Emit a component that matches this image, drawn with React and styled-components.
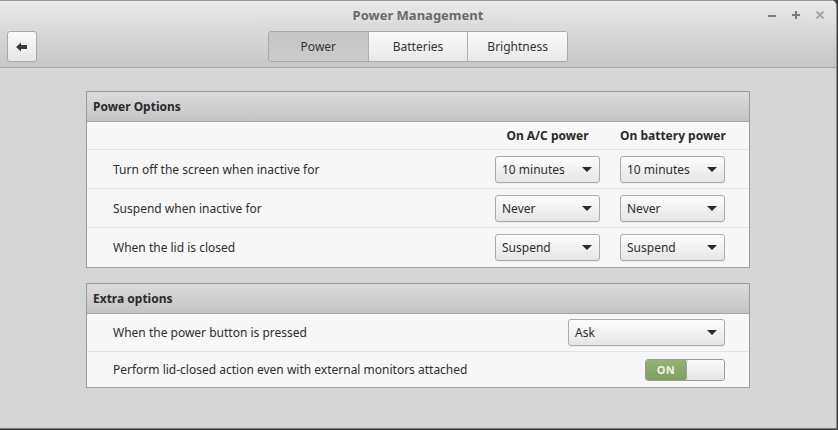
import React from "react";
import styled, { createGlobalStyle } from "styled-components";

const Global = createGlobalStyle`
    html, body { margin:0; padding:0; background:#3c3c3c; }
    body { font-family: "Noto Sans", "DejaVu Sans", sans-serif; }
`

const Window = styled.div`
    width:836px;
    height:428px;
    background-color:#d6d6d6;
    border-right:1px solid #8e8e8e;
    border-bottom:1px solid #7a7a7a;
    border-top-right-radius:6px;
    display:flex;
    flex-direction:column;
    overflow:hidden;
`

const TitleBar = styled.div`
    height:68px;
    box-sizing:border-box;
    border-top:1px solid #9a9a9a;
    border-bottom:1px solid #a6a6a6;
    background:linear-gradient(#e9e9e9, #c6c6c6);
    display:grid;
    grid-template-columns:1fr auto 1fr;
    grid-template-rows:28px 32px;
    padding:0 7px;
`

const Title = styled.div`
    grid-column:2;
    grid-row:1;
    align-self:center;
    text-align:center;
    font-size:13px;
    font-weight:bold;
    color:#6a6a6a;
`

const Controls = styled.div`
    grid-column:3;
    grid-row:1;
    justify-self:end;
    display:flex;
    gap:10px;
    align-items:center;
    padding-right:2px;
`

const Ctrl = styled.span`
    width:14px;
    height:14px;
    display:flex;
    align-items:center;
    justify-content:center;
`

const BackButton = styled.button`
    grid-column:1;
    grid-row:2;
    width:30px;
    height:31px;
    padding:0;
    border:1px solid #a9a9a9;
    border-radius:3px;
    background:linear-gradient(#fafafa, #e6e6e6);
    display:flex;
    align-items:center;
    justify-content:center;
    margin-top:2px;
`

const Tabs = styled.div`
    grid-column:2;
    grid-row:2;
    display:flex;
    margin-top:2px;
    height:31px;
    border:1px solid #a9a9a9;
    border-radius:3px;
    overflow:hidden;
    box-sizing:border-box;
    width:300px;
`

const Tab = styled.div`
    flex:1;
    display:flex;
    align-items:center;
    justify-content:center;
    font-size:12px;
    color:#333;
    background:${p => p.$active ? "linear-gradient(#c4c4c4, #cbcbcb)" : "linear-gradient(#fbfbfb, #e8e8e8)"};
    border-left:${p => p.$first ? "none" : "1px solid #b0b0b0"};
`

const Body = styled.div`
    flex:1;
    display:flex;
    flex-direction:column;
    align-items:center;
    padding-top:23px;
    gap:15px;
`

const Panel = styled.div`
    width:664px;
    box-sizing:border-box;
    border:1px solid #9c9c9c;
    background:#f7f7f7;
`

const PanelHeader = styled.div`
    height:30px;
    box-sizing:border-box;
    border-bottom:1px solid #a4a4a4;
    background:linear-gradient(#dcdcdc, #c3c3c3);
    display:flex;
    align-items:center;
    padding-left:6px;
    font-size:12px;
    font-weight:bold;
    color:#2b2b2b;
`

const ColumnHead = styled.div`
    height:28px;
    box-sizing:border-box;
    display:grid;
    grid-template-columns:1fr 105px 105px;
    column-gap:20px;
    padding-right:24px;
    align-items:center;
    border-bottom:1px solid #e3e3e3;
    font-size:12px;
    font-weight:bold;
    color:#2b2b2b;
    span { text-align:center; white-space:nowrap; }
`

const Row = styled.div`
    height:${p => p.$h || 39}px;
    box-sizing:border-box;
    display:grid;
    grid-template-columns:${p => p.$cols || "1fr 105px 105px"};
    column-gap:20px;
    padding:0 24px 0 26px;
    align-items:center;
    border-bottom:${p => p.$last ? "none" : "1px solid #e3e3e3"};
`

const Label = styled.div`
    font-size:12px;
    color:#2e2e2e;
`

const Select = styled.div`
    height:27px;
    box-sizing:border-box;
    border:1px solid #ababab;
    border-radius:3px;
    background:linear-gradient(#fdfdfd, #e5e5e5);
    display:flex;
    align-items:center;
    justify-content:space-between;
    padding:0 7px 0 6px;
    font-size:12px;
    color:#2e2e2e;
    box-shadow:0 1px 0 rgba(0,0,0,0.05);
`

const Arrow = styled.span`
    width:0;
    height:0;
    border-left:5px solid transparent;
    border-right:5px solid transparent;
    border-top:5px solid #2a2a2a;
`

const Switch = styled.div`
    justify-self:end;
    width:80px;
    height:22px;
    box-sizing:border-box;
    border:1px solid #9a9a9a;
    border-radius:3px;
    display:flex;
    overflow:hidden;
`

const SwitchOn = styled.div`
    width:40px;
    background:linear-gradient(#93b273, #7f9f60);
    color:#f2f2e6;
    font-size:11px;
    font-weight:bold;
    display:flex;
    align-items:center;
    justify-content:center;
    letter-spacing:0.5px;
`

const Knob = styled.div`
    flex:1;
    background:linear-gradient(#fafafa, #e4e4e4);
    border-left:1px solid #a0a0a0;
    border-radius:3px;
`

const Dropdown = ({ value }) => (
    <Select>{value}<Arrow /></Select>
)

const rows = [
    ["Turn off the screen when inactive for", "10 minutes", "10 minutes"],
    ["Suspend when inactive for", "Never", "Never"],
    ["When the lid is closed", "Suspend", "Suspend"],
]

export default function App() {
    return (
        <>
            <Global />
            <Window>
                <TitleBar>
                    <Title>Power Management</Title>
                    <Controls>
                        <Ctrl>
                            <svg width="10" height="10" viewBox="0 0 10 10"><rect x="1" y="5" width="8" height="2" fill="#7a7a7a" /></svg>
                        </Ctrl>
                        <Ctrl>
                            <svg width="10" height="10" viewBox="0 0 10 10"><path d="M1 5h8M5 1v8" stroke="#7a7a7a" strokeWidth="2" /></svg>
                        </Ctrl>
                        <Ctrl>
                            <svg width="10" height="10" viewBox="0 0 10 10"><path d="M1.5 1.5l7 7M8.5 1.5l-7 7" stroke="#a6a6a6" strokeWidth="2" /></svg>
                        </Ctrl>
                    </Controls>
                    <BackButton>
                        <svg width="12" height="10" viewBox="0 0 12 10">
                            <path d="M0 5 L5 0.5 L5 3 L11 3 L11 7 L5 7 L5 9.5 Z" fill="#3a3a3a" />
                        </svg>
                    </BackButton>
                    <Tabs>
                        <Tab $active $first>Power</Tab>
                        <Tab>Batteries</Tab>
                        <Tab>Brightness</Tab>
                    </Tabs>
                </TitleBar>
                <Body>
                    <Panel>
                        <PanelHeader>Power Options</PanelHeader>
                        <ColumnHead>
                            <span />
                            <span>On A/C power</span>
                            <span>On battery power</span>
                        </ColumnHead>
                        {rows.map((r, i) => (
                            <Row key={r[0]} $last={i === rows.length - 1}>
                                <Label>{r[0]}</Label>
                                <Dropdown value={r[1]} />
                                <Dropdown value={r[2]} />
                            </Row>
                        ))}
                    </Panel>
                    <Panel>
                        <PanelHeader>Extra options</PanelHeader>
                        <Row $h={38} $cols="1fr 157px">
                            <Label>When the power button is pressed</Label>
                            <Dropdown value="Ask" />
                        </Row>
                        <Row $h={35} $cols="1fr auto" $last>
                            <Label>Perform lid-closed action even with external monitors attached</Label>
                            <Switch>
                                <SwitchOn>ON</SwitchOn>
                                <Knob />
                            </Switch>
                        </Row>
                    </Panel>
                </Body>
            </Window>
        </>
    )
}
